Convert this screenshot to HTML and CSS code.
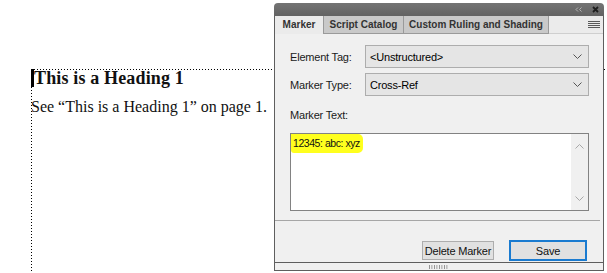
FILE: index.html
```html
<!DOCTYPE html>
<html lang="en">
<head>
    <meta charset="UTF-8">
    <meta name="viewport" content="width=device-width, initial-scale=1.0">
    <title>Marker</title>
    <link rel="stylesheet" href="styles.css">
</head>
<body>
    <!-- Document page -->
    <div class="doc">
        <div class="frame">
            <h1 class="heading"><span class="caret"></span>This is a Heading 1</h1>
            <p class="xref">See “This is a Heading 1” on page 1.</p>
        </div>
    </div>

    <!-- Marker pod -->
    <div class="pod">
        <div class="titlebar">
            <svg class="collapse" width="7" height="5" viewBox="0 0 7 5">
                <polyline points="3,0.5 1,2.5 3,4.5" fill="none" stroke="#b4b4b4" stroke-width="1"/>
                <polyline points="6.5,0.5 4.5,2.5 6.5,4.5" fill="none" stroke="#b4b4b4" stroke-width="1"/>
            </svg>
            <svg class="close" width="7" height="7" viewBox="0 0 7 7">
                <path d="M1 1 L6 6 M6 1 L1 6" stroke="#1e1e1e" stroke-width="1.8"/>
            </svg>
        </div>

        <div class="tabs">
            <div class="tab active">Marker</div>
            <div class="tab catalog">Script Catalog</div>
            <div class="tab ruling">Custom Ruling and Shading</div>
            <div class="menu">
                <svg width="12" height="8" viewBox="0 0 12 8">
                    <rect x="0" y="0" width="12" height="1" fill="#5a5a5a"/>
                    <rect x="0" y="2" width="12" height="1" fill="#5a5a5a"/>
                    <rect x="0" y="4" width="12" height="1" fill="#5a5a5a"/>
                    <rect x="0" y="6" width="12" height="1" fill="#5a5a5a"/>
                </svg>
            </div>
        </div>

        <div class="pod-body">
            <div class="row">
                <label>Element Tag:</label>
                <div class="select">
                    <span>&lt;Unstructured&gt;</span>
                    <svg width="9" height="5" viewBox="0 0 9 5"><polyline points="0.5,0.5 4.5,4.5 8.5,0.5" fill="none" stroke="#555" stroke-width="1"/></svg>
                </div>
            </div>
            <div class="row second">
                <label>Marker Type:</label>
                <div class="select">
                    <span>Cross-Ref</span>
                    <svg width="9" height="5" viewBox="0 0 9 5"><polyline points="0.5,0.5 4.5,4.5 8.5,0.5" fill="none" stroke="#555" stroke-width="1"/></svg>
                </div>
            </div>

            <div class="text-label">Marker Text:</div>
            <div class="textbox">
                <div class="text"><span class="hl">12345: abc: xyz</span></div>
                <div class="scroll">
                    <svg width="9" height="5" viewBox="0 0 9 5"><polyline points="0.5,4.5 4.5,0.5 8.5,4.5" fill="none" stroke="#a8a8a8" stroke-width="1"/></svg>
                    <svg width="9" height="5" viewBox="0 0 9 5"><polyline points="0.5,0.5 4.5,4.5 8.5,0.5" fill="none" stroke="#a8a8a8" stroke-width="1"/></svg>
                </div>
            </div>

            <div class="sep"></div>

            <div class="buttons">
                <button class="btn">Delete Marker</button>
                <button class="btn primary">Save</button>
            </div>
        </div>

        <div class="grip-bar"><span class="grip"></span></div>
    </div>
</body>
</html>
```

FILE: styles.css
```css
* {
    margin: 0;
    padding: 0;
    box-sizing: border-box;
}

body {
    background-color: white;
    width: 607px;
    height: 273px;
    overflow: hidden;
    position: relative;
}

/* Document page */
.doc {
    padding: 70px 0 0 31px;
    font-family: "Liberation Serif", "Times New Roman", serif;
    color: #111;
}

.frame {
    height: 203px;
    background-image:
        linear-gradient(to right, #000 1px, transparent 1px),
        linear-gradient(to bottom, #000 1px, transparent 1px);
    background-size: 3px 1px, 1px 3px;
    background-repeat: repeat-x, repeat-y;
    background-position: 0 0, 0 0;
}

.heading {
    font-size: 18px;
    line-height: 18px;
    font-weight: bold;
    letter-spacing: 0.15px;
    margin-top: -1px;
}

.caret {
    display: inline-block;
    width: 3px;
    height: 18px;
    background-color: #000;
    vertical-align: top;
}

.xref {
    font-size: 16px;
    line-height: 20px;
    margin-top: 10px;
}

/* Pod window */
.pod {
    position: absolute;
    left: 274px;
    top: 3px;
    width: 330px;
    display: flex;
    flex-direction: column;
    font-family: "Liberation Sans", Arial, sans-serif;
    font-size: 11px;
    letter-spacing: -0.2px;
    color: #1a1a1a;
}

.titlebar {
    height: 13px;
    background: linear-gradient(#747474, #626262);
    border-radius: 4px 4px 0 0;
    display: flex;
    justify-content: flex-end;
    align-items: center;
    padding-right: 5px;
}

.collapse {
    margin-right: 10px;
}

.tabs {
    height: 18px;
    display: flex;
    background-color: #ebebeb;
    border-left: 1px solid #5e5e5e;
    border-right: 1px solid #5e5e5e;
}

.tab {
    height: 18px;
    background-color: #c9c9c9;
    border-right: 1px solid #9a9a9a;
    border-bottom: 1px solid #9a9a9a;
    font-size: 10px;
    font-weight: bold;
    letter-spacing: 0;
    color: #333;
    text-align: center;
    line-height: 17px;
}

.tab.active {
    width: 49px;
    background-color: #ebebeb;
    border-bottom: none;
}

.tab.catalog {
    width: 80px;
}

.tab.ruling {
    width: 145px;
}

.menu {
    flex: 1;
    display: flex;
    justify-content: flex-end;
    align-items: center;
    padding-right: 3px;
    border-bottom: 1px solid #cfcfcf;
}

.menu svg {
    margin-top: 1px;
}

.pod-body {
    height: 228px;
    background-color: #f0f0f0;
    border-left: 1px solid #5e5e5e;
    border-right: 1px solid #5e5e5e;
    padding: 11px 14px 0 15px;
}

.row {
    display: grid;
    grid-template-columns: 75px 1fr;
    align-items: center;
    height: 23px;
}

.row.second {
    margin-top: 5px;
}

.select {
    height: 23px;
    background-color: #e5e5e5;
    border: 1px solid #adadad;
    color: #000;
    display: flex;
    align-items: center;
    justify-content: space-between;
    padding: 0 6px 0 4px;
}

.text-label {
    margin-top: 12px;
    height: 14px;
    line-height: 14px;
}

.textbox {
    margin-top: 11px;
    height: 78px;
    background-color: white;
    border: 1px solid #828282;
    display: flex;
}

.text {
    flex: 1;
    color: #111;
}

.hl {
    display: inline-block;
    background-color: #ffff1e;
    font-size: 10.5px;
    letter-spacing: -0.45px;
    padding: 3px 3px 4px 2px;
    line-height: 12px;
    border-radius: 0 5px 5px 3px;
}

.scroll {
    width: 17px;
    background-color: #f0f0f0;
    display: flex;
    flex-direction: column;
    justify-content: space-between;
    align-items: center;
    padding: 10px 0 9px;
}

.sep {
    height: 1px;
    background-color: #a6a6a6;
    margin: 9px -11px 0 -15px;
}

.buttons {
    display: flex;
    justify-content: flex-end;
    align-items: flex-start;
    gap: 15px;
    margin: 19px 2px 0 0;
}

.btn {
    font-family: "Liberation Sans", Arial, sans-serif;
    font-size: 11px;
    letter-spacing: -0.2px;
    color: #111;
    background-color: #e1e1e1;
    border: 1px solid #adadad;
    width: 72px;
    height: 19px;
    margin-top: 1px;
}

.btn.primary {
    width: 78px;
    height: 21px;
    margin-top: 0;
    border: 2px solid #1a7bd0;
}

.grip-bar {
    height: 9px;
    background-color: #f0f0f0;
    border: 1px solid #5e5e5e;
    display: flex;
    justify-content: center;
    align-items: center;
}

.grip {
    width: 20px;
    height: 4px;
    background-image: linear-gradient(to right, #8a8a8a 1px, transparent 1px);
    background-size: 2.5px 4px;
}
```
